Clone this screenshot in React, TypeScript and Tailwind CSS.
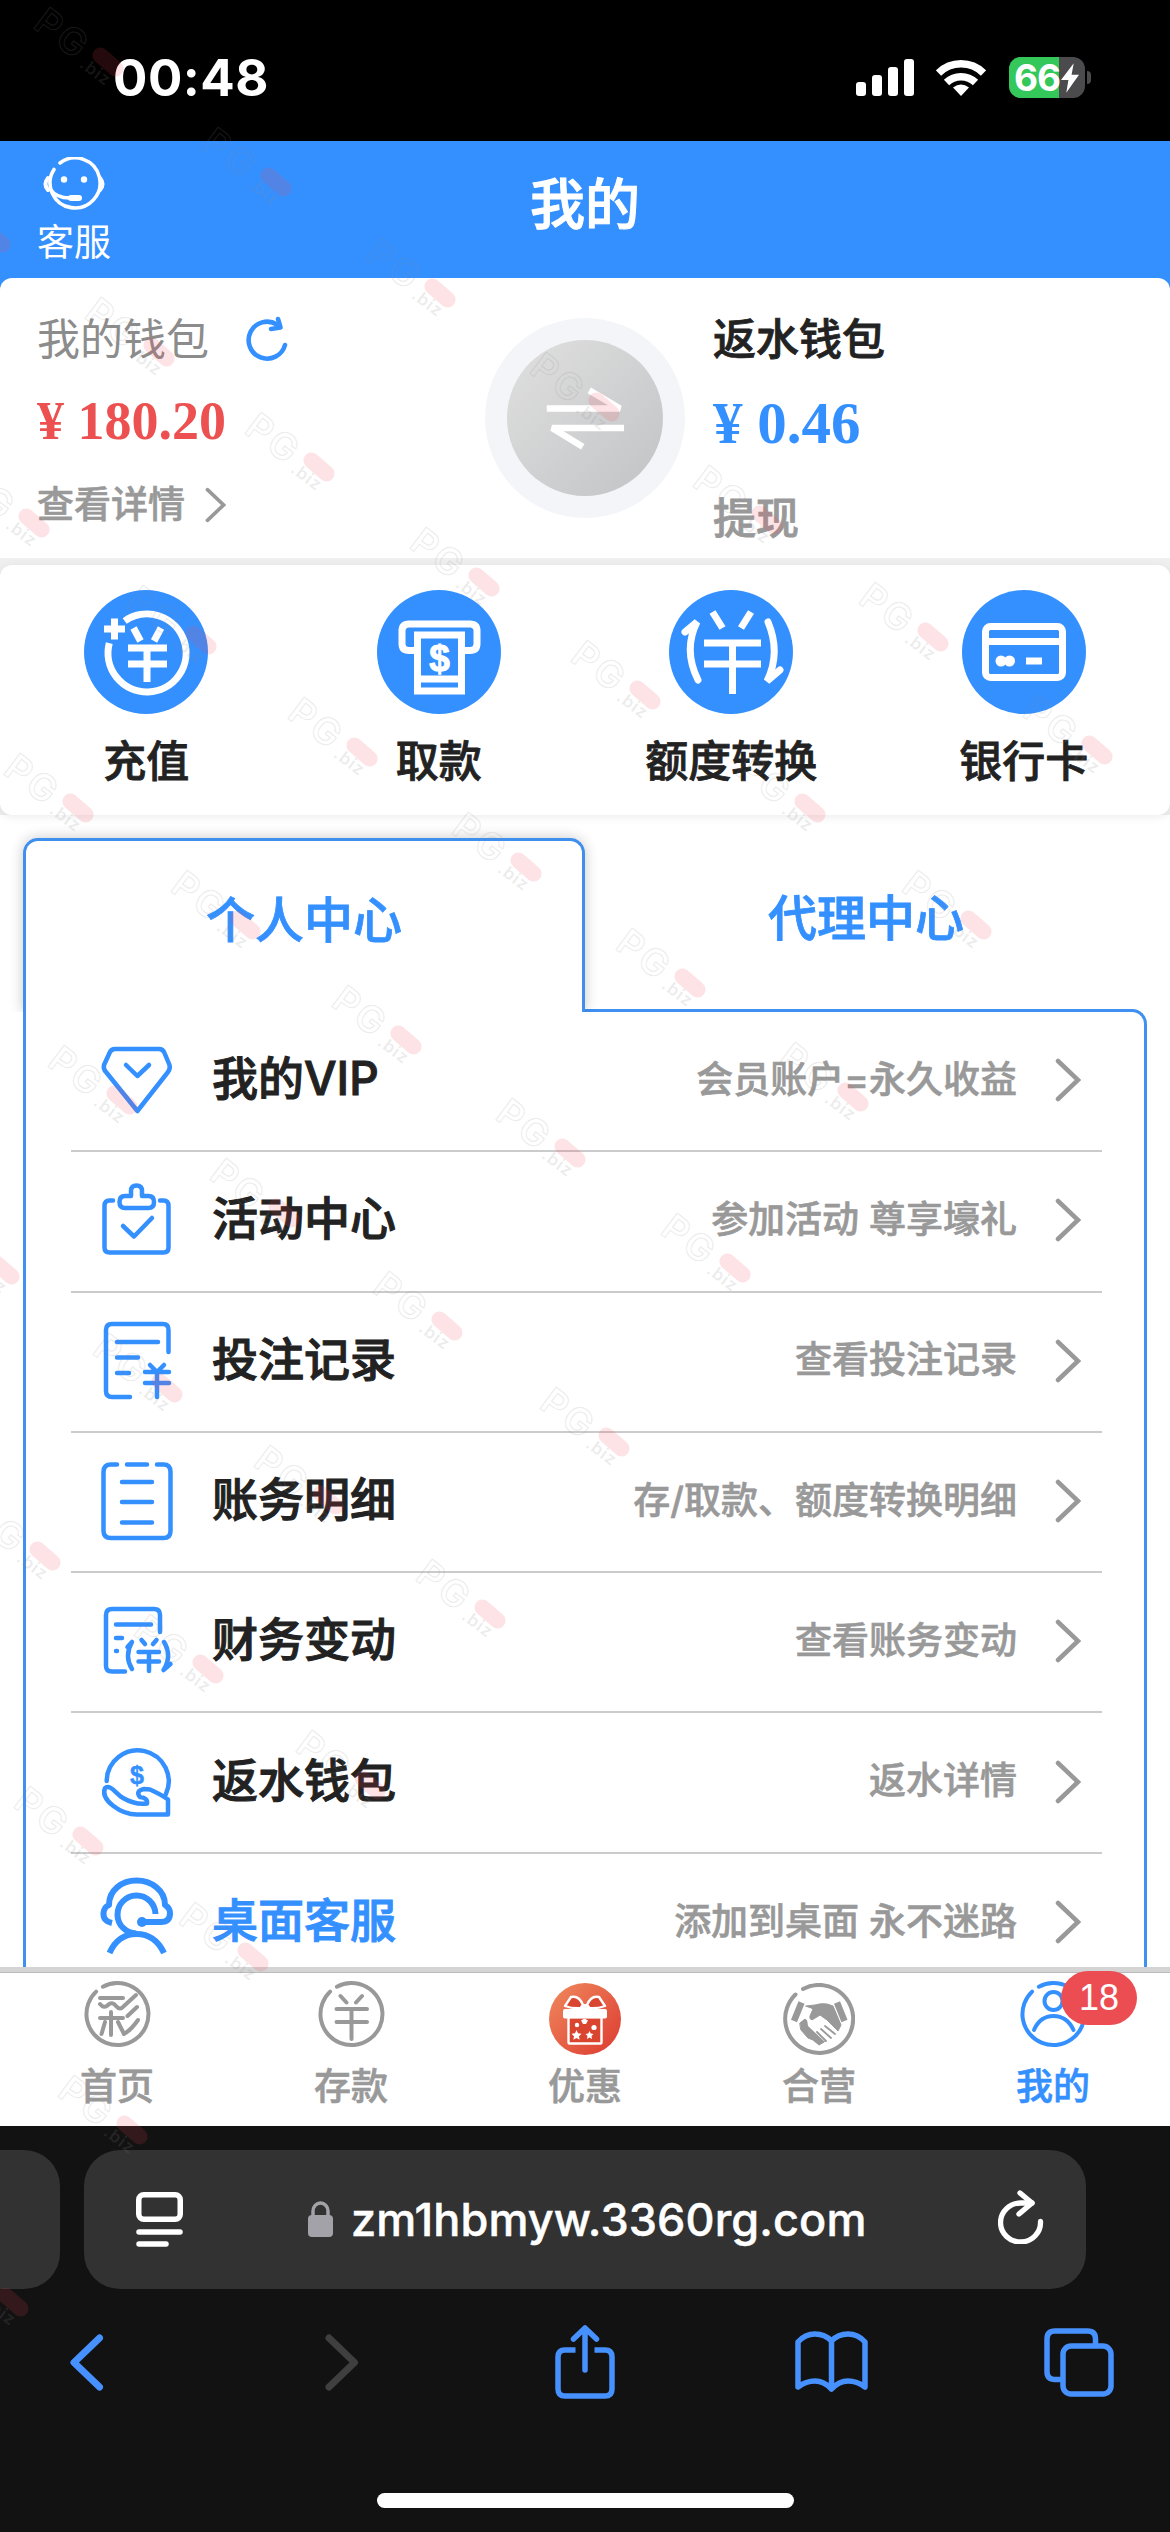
import React from 'react';

const Stroke = ({ size = 72, width = 4.5, children }: { size?: number; width?: number; children: React.ReactNode }) => (
  <svg
    width={size}
    height={size}
    viewBox={`0 0 ${size} ${size}`}
    fill="none"
    stroke="currentColor"
    strokeWidth={width}
    strokeLinecap="round"
    strokeLinejoin="round"
    className="overflow-visible shrink-0"
  >
    {children}
  </svg>
);

const Chevron = ({ className }: { className?: string }) => (
  <svg viewBox="0 0 26 44" fill="none" stroke="#999" strokeWidth="4.5" strokeLinecap="round" className={className}>
    <path d="M3 3l20 19L3 41" />
  </svg>
);

const quickItems = [
  {
    label: '充值',
    icon: (
      <>
        <path d="M40.700 31A39 39 0 1 1 25.300 53.100" />
        <path d="M30.500 28.500v21M20 39h21" />
        <path d="M49.500 38l7 13M77 38l-7 13M44 58h39M44 74h39M63 58v34" />
      </>
    ),
  },
  {
    label: '取款',
    icon: (
      <>
        <path d="M38 60.500h-6q-7 0-7-7V41q0-7 7-7h61q7 0 7 7v12.500q0 7-7 7h-6" />
        <path d="M40.500 45h44v56h-44zM40.500 89h44" />
        <text x="62.500" y="81" textAnchor="middle" fill="#fff" stroke="#fff" strokeWidth="1" className="text-[37px] font-bold font-['Liberation_Sans',sans-serif]">$</text>
      </>
    ),
  },
  {
    label: '额度转换',
    icon: (
      <>
        <path d="M43.500 22l10 16M82 22L72 38M35 53h57M35 74h57M63.500 53v51" />
        <path d="M16 42l12-10q-14 28 1 58M111 80l-13 11q14-28 1-59" strokeLinecap="round" />
      </>
    ),
  },
  {
    label: '银行卡',
    icon: (
      <>
        <rect x="23.500" y="36.500" width="77" height="51" rx="5" />
        <path d="M23 51.500h78M64 71h16" />
        <circle cx="39" cy="71" r="5.500" fill="#fff" stroke="none" />
        <circle cx="47.500" cy="71" r="5.500" fill="#fff" stroke="none" />
      </>
    ),
  },
];

const menuItems = [
  {
    label: '我的VIP',
    desc: '会员账户=永久收益',
    icon: (
      <>
        <path d="M15 4H59Q63 4 64.500 8L69.500 20Q70.500 24 68 27L37.400 66L6 27Q3 24 4 20L9.500 8Q11 4 15 4Z" />
        <path d="M26 20l11.400 11L49 20" />
      </>
    ),
  },
  {
    label: '活动中心',
    desc: '参加活动 尊享壕礼',
    icon: (
      <>
        <path d="M13 15.500H9.500Q4.500 15.500 4.500 21V62.500Q4.500 67.500 9.500 67.500H63.500Q68.500 67.500 68.500 62.500V21Q68.500 15.500 63.500 15.500H60" />
        <path d="M31 11V6Q31 .5 36.500 .5T42 6V11H48.500Q54 11 54 17T48.500 23H25Q19.500 23 19.500 17T25 11Z" />
        <path d="M23 41l11 10.500L52 33" />
      </>
    ),
  },
  {
    label: '投注记录',
    desc: '查看投注记录',
    icon: (
      <>
        <path d="M30 71H12Q6 71 6 65V4Q6-2 12-2H63Q68.500-2 68.500 4V26" />
        <path d="M17 16H58M17 31.500H38M17 47H29" />
        <path d="M50 39l7 7 7-7M45 46H69M45 57H69M57 46V71" />
      </>
    ),
  },
  {
    label: '账务明细',
    desc: '存/取款、额度转换明细',
    icon: (
      <>
        <path d="M17-1.500H11Q3.500-1.500 3.500 6V65Q3.500 72 11 72H63.500Q70.500 72 70.500 65V6Q70.500-1.500 63.500-1.500H57" />
        <path d="M27-1.500H47M22 16H52M22 36H52M22 56.500H52" />
      </>
    ),
  },
  {
    label: '财务变动',
    desc: '查看账务变动',
    icon: (
      <>
        <path d="M25 65.500H12Q6 65.500 6 60V9Q6 3 12 3H54Q60 3 60 9V26" />
        <path d="M16 18.500H51M16 32H22M16 45H17" />
        <path d="M41.500 34l3.500 4M56.500 34l-3.500 4M38.500 46H59M38.500 55.500H59M49 46V65" />
        <path d="M27.500 41l4.500-5q-8 14 0 27M70.500 58l-7 6q9-14 .5-28" />
      </>
    ),
  },
  {
    label: '返水钱包',
    desc: '返水详情',
    icon: (
      <>
        <path d="M6.700 34A31 31 0 1 1 65.700 47.600" />
        <text x="37" y="37" textAnchor="middle" fill="currentColor" stroke="currentColor" strokeWidth=".5" className="text-[25px] font-bold font-['Liberation_Sans',sans-serif]">$</text>
        <path d="M5 41C11 37 16 47 23 51Q35 58 47 56.500Q48 51 40 50Q35 44 44 42L50 42.500Q62 48 68 52.500V67.500H37C21 67.500 0 53 5 41Z" />
      </>
    ),
  },
  {
    label: '桌面客服',
    desc: '添加到桌面 永不迷路',
    active: true,
    icon: (
      <g strokeWidth="6" strokeLinecap="butt">
        <path d="M12 36Q3 34 3.500 26Q4 20 9 18C9 3 22-6.500 36.500-6.500S65 3 65 18Q70 21 70 26Q70 35 61 35H42" />
        <path d="M55.500 27A19 19 0 1 0 36.500 46.500" />
        <path d="M9.500 66Q18 47 36.500 47T64 66" />
        <circle cx="42" cy="35" r="5" fill="currentColor" stroke="none" />
      </g>
    ),
  },
];

const Ring = () => <path d="M18.900 5.700A31 31 0 1 1 12.100 10.600" />;

const tabs = [
  {
    label: '首页',
    icon: (
      <Stroke size={67} width={4}>
        <Ring />
        <path d="M16 17H39M16 23q4 5 8 1t8 1 8 0L52 14M16 37H39M27 31V54M21 41L17.500 53M34 41l6 12Q47 49 54 39M53 26L43.500 35" />
      </Stroke>
    ),
  },
  {
    label: '存款',
    icon: (
      <Stroke size={67} width={4}>
        <Ring />
        <path d="M22.500 15l6 6.500M44 15l-6 6.500M18.500 28H49M18.500 41H49M33.500 28V58" />
      </Stroke>
    ),
  },
  {
    label: '优惠',
    icon: (
      <svg width="72" height="72" viewBox="0 0 72 72" className="relative top-[4px]">
        <defs>
          <linearGradient id="gift" x1="0" y1="0" x2="1" y2="1">
            <stop offset="0" stopColor="#f08a5e" />
            <stop offset="1" stopColor="#dc3a30" />
          </linearGradient>
        </defs>
        <circle cx="36" cy="36" r="36" fill="url(#gift)" />
        <g fill="#d9452f" stroke="#fff" strokeWidth="2.400" strokeLinejoin="round">
          <path d="M34 25Q24 26 16 23L22 14Q30 12 34 22ZM38 25Q48 26 56 23L50 14Q42 12 38 22Z" />
          <rect x="19.500" y="34" width="33" height="26.500" rx="1" />
        </g>
        <rect x="14" y="26" width="44" height="9.500" rx="2" fill="#fff" />
        <ellipse cx="36" cy="24" rx="5" ry="3" fill="#fff" />
        <g fill="#fff">
          <path d="M27.500 47l1.500 3.200 3.500.5-2.500 2.500.6 3.600-3.100-1.700-3.100 1.700.6-3.600-2.500-2.500 3.500-.5z" />
          <path d="M40.500 48l1.200 2.600 2.800.4-2 2 .5 2.900-2.500-1.400-2.500 1.400.5-2.900-2-2 2.800-.4z" />
          <path d="M35.500 35.500l3.500 2-2 3.500h-3l-2-3.500z" />
          <circle cx="28" cy="42" r="2.200" />
          <circle cx="45" cy="44.500" r="2.600" />
        </g>
      </svg>
    ),
  },
  {
    label: '合营',
    icon: (
      <svg width="72" height="72" viewBox="0 0 72 72" fill="none" stroke="#999" strokeLinecap="round" className="relative top-[4px]">
        <path d="M20 6A34 34 0 1 1 12.500 11.500" strokeWidth="4" />
        <path d="M18.500 19.500L11 38M54 19.500L61.500 38" strokeWidth="6.500" strokeLinecap="butt" />
        <path d="M23 23L32 22Q38 20 44 21L50 23L58 42L55 48L44 37L37 32L29 37Q26 36 27 33L30 26Z" fill="#999" strokeWidth="1" />
        <path d="M17 40L22 36L38 51L45 56L41 59L36 62L30 57L25 55L18 47Z" fill="#999" strokeWidth="1" />
        <path d="M24 36L36 39L42 38L54 49L51 53L49 57L45 59L41 58L25 43Z" fill="#fff" stroke="none" />
        <path d="M42 43l10 8M38 46l10 9M34 49l9 9" strokeWidth="1.800" />
      </svg>
    ),
  },
  {
    label: '我的',
    active: true,
    icon: (
      <Stroke size={67} width={4}>
        <Ring />
        <circle cx="33.500" cy="20" r="9" />
        <path d="M14 49Q20 35 33.500 35T53.500 49" />
      </Stroke>
    ),
  },
];

const marks = [
  [108, 62], [276, 182], [440, 293], [604, 407], [767, 520], [933, 637], [1097, 750],
  [-5, 238], [159, 352], [319, 467], [484, 582], [645, 695], [810, 808], [976, 925],
  [34, 523], [201, 640], [362, 752], [526, 867], [690, 983], [853, 1097],
  [78, 808], [245, 925], [406, 1040], [570, 1153], [735, 1268],
  [122, 1100], [284, 1213], [447, 1326], [614, 1442],
  [4, 1270], [167, 1388], [328, 1500], [490, 1614],
  [45, 1556], [208, 1669], [370, 1785],
  [88, 1841], [253, 1957], [132, 2130], [13, 2302],
];

function Watermark() {
  return (
    <svg width="1170" height="2532" className="absolute inset-0 z-50 pointer-events-none font-['Inter',sans-serif]">
      {marks.map(([x, y]) => (
        <g key={`${x}-${y}`} transform={`translate(${x} ${y}) rotate(37)`}>
          <text x="-82" y="18" fill="none" stroke="#888" strokeOpacity=".17" strokeWidth="1.200" className="text-[37px] font-semibold tracking-[3px]">PG</text>
          <rect x="-18" y="-8" width="36" height="16" rx="8" fill="#f04450" fillOpacity=".15" transform="rotate(4)" />
          <text x="-21" y="21" fill="#888" fillOpacity=".17" className="text-[17px] font-semibold tracking-[1px]">.biz</text>
        </g>
      ))}
    </svg>
  );
}

function StatusBar() {
  return (
    <div className="h-[141px] shrink-0 bg-black flex items-start justify-between pl-[113px] pr-[79px] pt-[57px] text-white">
      <span className="text-[51px] leading-[42px] font-bold tracking-[0.5px] font-['Inter',sans-serif]">00:48</span>
      <div className="flex items-center">
        <svg width="58" height="37" viewBox="0 0 58 37" fill="#fff">
          <rect x="0" y="23" width="10" height="14" rx="3" />
          <rect x="16" y="16" width="10" height="21" rx="3" />
          <rect x="32" y="8" width="10" height="29" rx="3" />
          <rect x="48" y="0" width="10" height="37" rx="3" />
        </svg>
        <svg width="50" height="37" viewBox="0 0 50 37" fill="none" stroke="#fff" strokeWidth="7.500" className="ml-[22px]">
          <path d="M2.500 14a32 32 0 0 1 45 0M10.500 23.500a21 21 0 0 1 29 0" />
          <path d="M25 37l-8-8.500q8-6 16 0z" fill="#fff" stroke="none" />
        </svg>
        <div className="relative ml-[23px] w-[76px] h-[41px] rounded-[12px] overflow-hidden bg-[#4b4b4d]">
          <div className="w-[50px] h-full bg-[#34c759]" />
          <div className="absolute inset-0 flex items-center pl-[5px]">
            <span className="text-[37px] leading-none font-bold tracking-[-1px] font-['Inter',sans-serif]">66</span>
            <svg width="18" height="30" viewBox="0 0 17 28" fill="#fff" className="ml-px">
              <path d="M12 0L0 16h7L5 28 17 11h-7z" />
            </svg>
          </div>
        </div>
        <div className="ml-[2px] w-[4px] h-[13px] rounded-r-full bg-[#4b4b4d]" />
      </div>
    </div>
  );
}

function Header() {
  return (
    <header className="h-[137px] shrink-0 bg-[#3590ff] text-white grid grid-cols-3">
      <div className="w-[148px] flex flex-col items-center pt-[16px]">
        <svg width="62" height="54" viewBox="0 0 62 54" fill="none" stroke="#fff" strokeWidth="3.600" strokeLinecap="round">
          <path d="M17 6A25 25 0 1 1 11 12.500" />
          <path d="M5 21Q0 27 5 33M57 21Q62 27 57 33" strokeWidth="4" />
          <path d="M7 32Q13 41 27 41" />
          <rect x="25" y="38" width="14" height="6" rx="3" fill="#fff" stroke="none" />
          <circle cx="21" cy="22.500" r="3.200" fill="#fff" stroke="none" />
          <circle cx="41" cy="22.500" r="3.200" fill="#fff" stroke="none" />
        </svg>
        <span className="mt-[12px] text-[37px] leading-[40px]">客服</span>
      </div>
      <h1 className="text-center text-[55px] leading-[127px] font-medium [-webkit-text-stroke:1px]">我的</h1>
    </header>
  );
}

function Wallets() {
  return (
    <section className="bg-[#3590ff] shrink-0">
      <div className="h-[280px] rounded-t-[12px] bg-white flex">
        <div className="w-[485px] pl-[37px]">
          <div className="mt-[38px] flex items-center h-[46px]">
            <span className="text-[43px] leading-[46px] text-[#8c8c8c]">我的钱包</span>
            <svg width="42" height="46" viewBox="0 0 42 46" fill="none" stroke="#3590ff" strokeWidth="4.600" strokeLinecap="round" strokeLinejoin="round" className="ml-[37px]">
              <path d="M31 8.500A18.500 18.500 0 1 0 39 29" />
              <path d="M32 3l2.500 8.500L25 13" />
            </svg>
          </div>
          <div className="mt-[32px] text-[54px] leading-[54px] font-bold text-[#ec5050] font-['Liberation_Serif',serif]">¥ 180.20</div>
          <div className="mt-[35px] flex items-center h-[44px] text-[#999]">
            <span className="text-[37px] leading-[44px] font-medium [-webkit-text-stroke:0.6px]">查看详情</span>
            <Chevron className="ml-[20px] w-[21px] h-[36px]" />
          </div>
        </div>
        <div className="mt-[40px] w-[200px] h-[200px] rounded-full bg-[#f3f5f8] flex items-center justify-center">
          <div className="w-[156px] h-[156px] rounded-full bg-linear-to-br from-[#e0e0e0] to-[#c2c3c5] flex items-center justify-center">
            <svg width="78" height="64" viewBox="0 0 78 64" fill="none" stroke="#fff" strokeWidth="6.500">
              <path d="M4 22.500H74L46 6" strokeLinecap="square" strokeLinejoin="bevel" />
              <path d="M76 42H6L34 59" strokeLinecap="square" strokeLinejoin="bevel" />
            </svg>
          </div>
        </div>
        <div className="pl-[28px]">
          <div className="mt-[38px] text-[43px] leading-[46px] font-medium text-[#222] [-webkit-text-stroke:0.8px]">返水钱包</div>
          <div className="mt-[34px] text-[59px] leading-[54px] font-bold text-[#3590ff] font-['Liberation_Serif',serif]">¥ 0.46</div>
          <div className="mt-[45px] text-[43px] leading-[46px] font-medium text-[#999] [-webkit-text-stroke:0.8px]">提现</div>
        </div>
      </div>
    </section>
  );
}

function QuickActions() {
  return (
    <section className="mt-[7px] h-[250px] shrink-0 relative z-10 rounded-[12px] bg-white grid grid-cols-4 shadow-[0_2px_8px_rgba(0,0,0,0.08)]">
      {quickItems.map((item) => (
        <div key={item.label} className="flex flex-col items-center pt-[25px]">
          <div className="w-[124px] h-[124px] rounded-full bg-[#3590ff]">
            <svg width="124" height="124" viewBox="0 0 124 124" fill="none" stroke="#fff" strokeWidth="7">
              {item.icon}
            </svg>
          </div>
          <span className="mt-[24px] text-[43px] leading-[46px] font-medium text-[#222] [-webkit-text-stroke:0.8px]">{item.label}</span>
        </div>
      ))}
    </section>
  );
}

function MemberCenter() {
  return (
    <section className="flex-1 min-h-0 bg-white pt-[23px] px-[23px]">
      <div className="flex h-[171px] text-[49px] leading-[60px] font-medium text-[#3590ff] text-center [-webkit-text-stroke:0.8px]">
        <div className="relative z-10 w-[562px] h-[174px] pt-[50px] rounded-t-[15px] border-[3px] border-b-0 border-[#3f8fef] bg-white shadow-[0_0_14px_rgba(0,0,0,0.22)] [clip-path:inset(-14px_-14px_0_-14px)]">
          个人中心
        </div>
        <div className="flex-1 pt-[51px]">代理中心</div>
      </div>
      <ul className="rounded-tr-[15px] border-[3px] border-b-0 border-[#3f90f0] pl-[45px] pr-[42px]">
        {menuItems.map((item) => (
          <li key={item.label} className="h-[140.300px] flex items-center pl-[29px] pr-[21px] border-b-2 border-[#cbcbcb]">
            <span className="text-[#3590ff]">
              <Stroke>{item.icon}</Stroke>
            </span>
            <span className={`ml-[40px] mb-[5px] text-[46px] font-medium [-webkit-text-stroke:1px] ${item.active ? 'text-[#3590ff]' : 'text-[#222]'}`}>{item.label}</span>
            <span className="ml-auto mb-[3px] text-[37px] font-medium text-[#999] [-webkit-text-stroke:0.6px]">{item.desc}</span>
            <Chevron className="ml-[38px] mb-[2px] w-[26px] h-[44px]" />
          </li>
        ))}
      </ul>
    </section>
  );
}

function TabBar() {
  return (
    <nav className="relative z-20 h-[159px] shrink-0 border-t-[5px] border-[#d4d4d4] bg-white">
      <div className="h-full border-t border-[#bbb] grid grid-cols-5">
        {tabs.map((tab) => (
          <div key={tab.label} className={`relative flex flex-col items-center pt-[8px] ${tab.active ? 'text-[#3590ff]' : 'text-[#999]'}`}>
            <div className="h-[67px] flex items-center">{tab.icon}</div>
            <span className="mt-[17px] text-[37px] leading-[44px] font-medium [-webkit-text-stroke:0.6px]">{tab.label}</span>
            {tab.active && (
              <span className="absolute left-[125px] -top-[2px] w-[76px] h-[54px] rounded-full bg-[#ec4d53] text-white text-center text-[36px] leading-[53px] font-['Liberation_Sans',sans-serif]">
                18
              </span>
            )}
          </div>
        ))}
      </div>
    </nav>
  );
}

function BrowserBar() {
  return (
    <footer className="h-[406px] shrink-0 bg-[#121212] flex flex-col">
      <div className="mt-[24px] flex gap-[24px]">
        <div className="w-[60px] h-[139px] rounded-r-[36px] bg-[#323232]" />
        <div className="w-[1002px] h-[139px] rounded-[36px] bg-[#323232] flex items-center pl-[52px] pr-[42px]">
          <svg width="47" height="55" viewBox="0 0 47 55" fill="none" stroke="#fff" strokeWidth="5.500" strokeLinecap="round">
            <rect x="2.750" y="2.750" width="41.500" height="24.500" rx="5" />
            <path d="M3 40H44M3 52H30" />
          </svg>
          <svg width="25" height="36" viewBox="0 0 25 36" className="ml-[125px] mb-[2px]">
            <path d="M5 16V10a7.500 8 0 0 1 15 0v6" fill="none" stroke="#a3a2a8" strokeWidth="3.500" />
            <rect y="14" width="25" height="22" rx="4" fill="#a3a2a8" />
          </svg>
          <span className="ml-[18px] text-[45px] tracking-[0.1px] font-medium text-white whitespace-nowrap font-['Inter',sans-serif] [-webkit-text-stroke:0.5px]">zm1hbmyw.3360rg.com</span>
          <svg width="46" height="54" viewBox="0 0 46 54" fill="none" stroke="#fff" strokeWidth="5.300" strokeLinecap="round" strokeLinejoin="round" className="ml-auto mb-[6px]">
            <path d="M34 13H23A20 19.500 0 1 0 42.500 31.500" />
            <path d="M22 3l12 10L21 24" />
          </svg>
        </div>
      </div>
      <div className="mt-[36px] h-[74px] flex items-center pl-[70px] text-[#4791ff]">
        <svg width="34" height="57" viewBox="0 0 34 57" fill="none" stroke="currentColor" strokeWidth="7" strokeLinecap="round" strokeLinejoin="round">
          <path d="M29.500 4L4 28.500 29.500 53" />
        </svg>
        <svg width="34" height="57" viewBox="0 0 34 57" fill="none" stroke="#3f3f3f" strokeWidth="7" strokeLinecap="round" strokeLinejoin="round" className="ml-[221px]">
          <path d="M4 4l25.500 24.500L4 53" />
        </svg>
        <svg width="60" height="74" viewBox="0 0 60 74" fill="none" stroke="currentColor" strokeWidth="5.500" strokeLinecap="round" strokeLinejoin="round" className="ml-[196px]">
          <path d="M20.500 25H10q-7 0-7 7v32q0 7 7 7h40q7 0 7-7V32q0-7-7-7H39.500" strokeLinecap="butt" />
          <path d="M30 45V3M18.500 14L30 3l11.500 11" />
        </svg>
        <svg width="73" height="62" viewBox="0 0 73 62" fill="none" stroke="currentColor" strokeWidth="5.500" strokeLinecap="round" strokeLinejoin="round" className="ml-[180px]">
          <path d="M36.500 10Q30 3 20 3T3 11V56Q11 50 20 50T36.500 58Q44 50 53 50T70 56V11Q63 3 53 3T36.500 10ZM36.500 10V57" />
        </svg>
        <svg width="70" height="69" viewBox="0 0 70 69" fill="none" stroke="currentColor" strokeWidth="5.500" className="ml-[176px]">
          <path d="M17 51.500H11q-8 0-8-8V11q0-8 8-8H43.500q8 0 8 8v5" />
          <rect x="19" y="18" width="48" height="48" rx="8" />
        </svg>
      </div>
      <div className="mt-[94px] mx-auto w-[417px] h-[15px] rounded-full bg-white" />
    </footer>
  );
}

export default function App() {
  return (
    <div className="relative w-[1170px] h-[2532px] overflow-hidden bg-[#efefef] flex flex-col font-['Inter','Noto_Sans_CJK_SC',sans-serif]">
      <StatusBar />
      <Header />
      <Wallets />
      <QuickActions />
      <MemberCenter />
      <TabBar />
      <BrowserBar />
      <Watermark />
    </div>
  );
}
